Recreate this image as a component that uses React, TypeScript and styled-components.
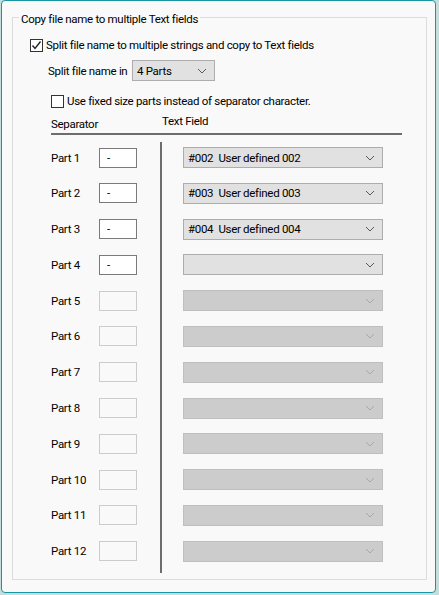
import React from 'react';
import styled, { createGlobalStyle } from 'styled-components';

const GlobalStyle = createGlobalStyle`
  html, body {
    margin: 0;
    padding: 0;
    background: #c3dedb;
  }
  body {
    font-family: "Segoe UI", Roboto, "Noto Sans", sans-serif;
    font-size: 11.5px;
    letter-spacing: -0.3px;
    color: #000;
  }
`;

const assignments = ['#002  User defined 002', '#003  User defined 003', '#004  User defined 004', ''];
const parts = Array.from({ length: 12 }, (_, i) => i + 1);

const Chevron: React.FC<{ disabled?: boolean }> = ({ disabled }) => (
  <svg width="10" height="6" viewBox="0 0 10 6">
    <path d="M1 1 L5 5 L9 1" fill="none" stroke={disabled ? '#a8a8a8' : '#5a5a5a'} strokeWidth="1" />
  </svg>
);

const CheckBox: React.FC<{ checked?: boolean }> = ({ checked }) => (
  <Box>
    {checked && (
      <svg width="11" height="11" viewBox="0 0 11 11">
        <path d="M1.5 5.5 L4 8.5 L9.5 1.5" fill="none" stroke="#222" strokeWidth="1.4" />
      </svg>
    )}
  </Box>
);

const App: React.FC = () => {
  return (
    <>
      <GlobalStyle />
      <Window>
        <Group>
          <GroupTitle>Copy file name to multiple Text fields</GroupTitle>
          <CheckRow $indent={17} $top={19}>
            <CheckBox checked />
            <span>Split file name to multiple strings and copy to Text fields</span>
          </CheckRow>
          <SplitRow>
            <SplitLabel>Split file name in</SplitLabel>
            <Select $width={83}>
              <span>4 Parts</span>
              <Chevron />
            </Select>
          </SplitRow>
          <CheckRow $indent={38} $top={12}>
            <CheckBox />
            <span>Use fixed size parts instead of separator character.</span>
          </CheckRow>
          <Header>
            <SeparatorHead>Separator</SeparatorHead>
            <FieldHead>Text Field</FieldHead>
          </Header>
          <HeaderLine />
          <Body>
            <LeftColumn>
              {parts.map((n) => (
                <PartRow key={n}>
                  <PartLabel>Part {n}</PartLabel>
                  <SepInput $disabled={n > 4}>{n <= 4 ? '-' : ''}</SepInput>
                </PartRow>
              ))}
            </LeftColumn>
            <RightColumn>
              {parts.map((n) => {
                const disabled = n > 4;
                return (
                  <Select key={n} $width={200} $disabled={disabled}>
                    <span>{disabled ? '' : assignments[n - 1]}</span>
                    <Chevron disabled={disabled} />
                  </Select>
                );
              })}
            </RightColumn>
          </Body>
        </Group>
      </Window>
    </>
  );
};

export default App;

const Window = styled.div`
  box-sizing: border-box;
  width: 435px;
  margin-left: 1px;
  background: #f9f9f9;
  border: 1px solid #1896a4;
  border-radius: 4px;
  padding: 16px 0 12px 10px;
`;

const Group = styled.div`
  position: relative;
  box-sizing: border-box;
  width: 415px;
  border: 1px solid #dcdcdc;
  padding-bottom: 6px;
`;

const GroupTitle = styled.div`
  position: absolute;
  left: 6px;
  top: -7px;
  padding: 0 2px;
  background: #f9f9f9;
  line-height: 16px;
  white-space: nowrap;
`;

const CheckRow = styled.div<{ $indent: number; $top: number }>`
  display: flex;
  align-items: center;
  gap: 3px;
  height: 16px;
  margin-top: ${({ $top }) => $top}px;
  padding-left: ${({ $indent }) => $indent}px;
  white-space: nowrap;
`;

const Box = styled.div`
  box-sizing: border-box;
  width: 13px;
  height: 13px;
  border: 1px solid #333;
  background: #fff;
  display: flex;
  align-items: center;
  justify-content: center;
`;

const SplitRow = styled.div`
  display: flex;
  align-items: center;
  height: 21px;
  margin-top: 7px;
  padding-left: 35px;
`;

const SplitLabel = styled.span`
  width: 84px;
  white-space: nowrap;
`;

const Select = styled.div<{ $width: number; $disabled?: boolean }>`
  box-sizing: border-box;
  width: ${({ $width }) => $width}px;
  height: 21px;
  flex-shrink: 0;
  display: flex;
  align-items: center;
  justify-content: space-between;
  padding: 0 7px 0 4px;
  background: ${({ $disabled }) => ($disabled ? '#cccccc' : '#e1e1e1')};
  border: 1px solid ${({ $disabled }) => ($disabled ? '#bfbfbf' : '#adadad')};
  white-space: pre;
`;

const Header = styled.div`
  display: flex;
  align-items: flex-end;
  height: 16px;
  margin-top: 7px;
  padding-left: 38px;
  line-height: 16px;
`;

const SeparatorHead = styled.span`
  width: 111px;
`;

const FieldHead = styled.span`
  margin-bottom: 3px;
`;

const HeaderLine = styled.div`
  width: 351px;
  height: 2px;
  margin: 1px 0 0 38px;
  background: #6d6d6d;
`;

const Body = styled.div`
  display: flex;
  margin-top: 7px;
  padding-left: 38px;
`;

const LeftColumn = styled.div`
  width: 109px;
  display: flex;
  flex-direction: column;
  gap: 14.8px;
  padding-top: 5px;
`;

const PartRow = styled.div`
  display: flex;
  align-items: center;
  height: 21px;
  white-space: nowrap;
`;

const PartLabel = styled.span`
  width: 48px;
`;

const SepInput = styled.div<{ $disabled?: boolean }>`
  box-sizing: border-box;
  width: 38px;
  height: 20px;
  padding-left: 7px;
  line-height: 18px;
  background: ${({ $disabled }) => ($disabled ? '#f9f9f9' : '#fff')};
  border: 1px solid ${({ $disabled }) => ($disabled ? '#cccccc' : '#7a7a7a')};
`;

const RightColumn = styled.div`
  display: flex;
  flex-direction: column;
  gap: 14.8px;
  padding: 5px 0 11px 21px;
  border-left: 2px solid #6d6d6d;
`;
